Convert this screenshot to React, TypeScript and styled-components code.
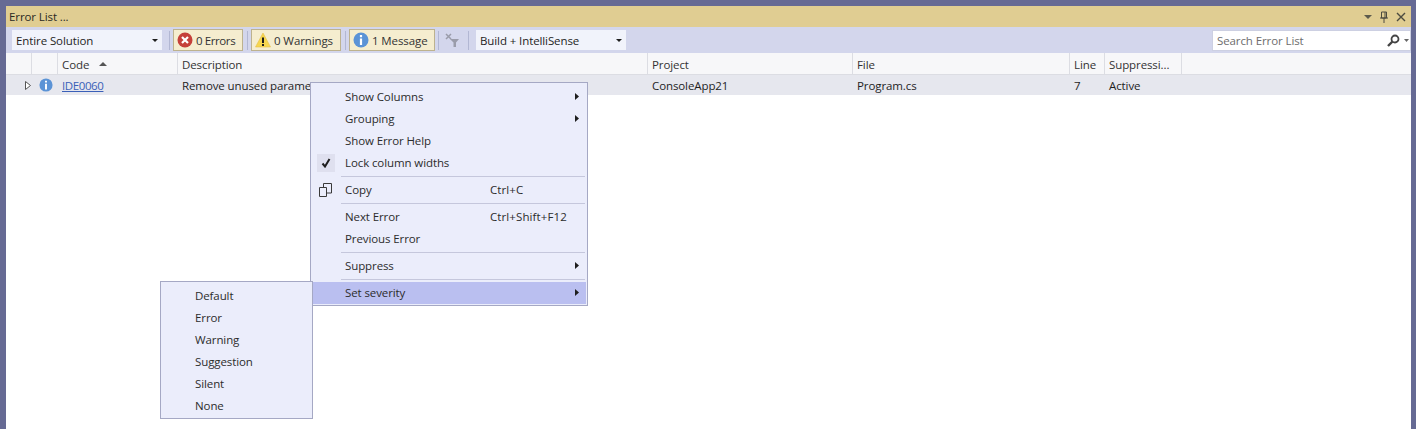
import styled, { createGlobalStyle } from "styled-components";

const GlobalStyle = createGlobalStyle`
  html, body {
    margin: 0;
    height: 429px;
    overflow: hidden;
    background: #666a94;
    font-family: "Open Sans", "Noto Sans", sans-serif;
    font-size: 11.5px;
    letter-spacing: -0.1px;
    color: #1e1e1e;
  }
`;

const columns = [
  { title: "", width: 26 },
  { title: "", width: 26 },
  { title: "Code", width: 120, sorted: true },
  { title: "Description", width: 470 },
  { title: "Project", width: 205 },
  { title: "File", width: 217 },
  { title: "Line", width: 35 },
  { title: "Suppressi...", width: 77 },
];

const ErrorIcon = () => (
  <svg width="16" height="16" viewBox="0 0 16 16">
    <circle cx="8" cy="8" r="7.5" fill="#c5403a" />
    <path d="M5 5l6 6M11 5l-6 6" stroke="#fff" strokeWidth="2.2" />
  </svg>
);

const WarningIcon = () => (
  <svg width="16" height="16" viewBox="0 0 16 16">
    <path d="M8 1L15.5 15H.5z" fill="#f6d64f" stroke="#e5c04a" strokeWidth=".6" />
    <path d="M8 5.5v5.5M8 12v2" stroke="#1e1e1e" strokeWidth="2" />
  </svg>
);

const InfoIcon = ({ size = 16 }: { size?: number }) => (
  <svg width={size} height={size} viewBox="0 0 16 16">
    <circle cx="8" cy="8" r="7.5" fill="#5b93d6" />
    <path d="M8 3v2.2M8 6.6V13" stroke="#fff" strokeWidth="2.2" />
  </svg>
);

const Caret = () => (
  <svg width="6" height="3" viewBox="0 0 6 3">
    <path d="M0 0h6L3 3z" fill="#1e1e1e" />
  </svg>
);

const Arrow = () => (
  <svg width="4" height="7" viewBox="0 0 4 7">
    <path d="M0 0l4 3.5L0 7z" fill="#1e1e1e" />
  </svg>
);

export default function App() {
  return (
    <>
      <GlobalStyle />
      <Window>
        <TitleBar>
          <span>Error List ...</span>
          <TitleIcons>
            <svg width="8" height="4" viewBox="0 0 8 4">
              <path d="M0 0h8L4 4z" fill="#5d5b4c" />
            </svg>
            <svg width="8" height="12" viewBox="0 0 8 12">
              <path d="M1.500 1h5v6h-5zM0 7h8M4 7v5M5 1v6" stroke="#4c4b40" fill="none" />
            </svg>
            <svg width="10" height="10" viewBox="0 0 10 10">
              <path d="M1 1l8 8M9 1l-8 8" stroke="#4c4b40" strokeWidth="1.4" />
            </svg>
          </TitleIcons>
        </TitleBar>
        <Toolbar>
          <Combo>
            Entire Solution
            <Caret />
          </Combo>
          <Separator $before={7} $after={3} />
          <FilterButton $width={70}>
            <ErrorIcon />
            <ButtonLabel>0 Errors</ButtonLabel>
          </FilterButton>
          <Separator $before={4} $after={3} />
          <FilterButton $width={90}>
            <WarningIcon />
            <span>0 Warnings</span>
          </FilterButton>
          <Separator $before={4} $after={3} />
          <FilterButton $width={86}>
            <InfoIcon />
            <span>1 Message</span>
          </FilterButton>
          <Separator $before={3} $after={6} />
          <ClearFilter>
            <svg width="15" height="15" viewBox="0 0 15 15">
              <path d="M1 1l5 5M6 1L1 6" stroke="#9a9caa" strokeWidth="1.5" />
              <path d="M5 6h9L11 9.500V14H8.500V9.500z" fill="#9a9caa" />
            </svg>
          </ClearFilter>
          <Separator $before={8} $after={7} />
          <Combo>
            Build + IntelliSense
            <Caret />
          </Combo>
          <Search>
            <span>Search Error List</span>
            <SearchIcons>
              <svg width="13" height="13" viewBox="0 0 13 13">
                <circle cx="8" cy="5" r="3.500" fill="none" stroke="#444" strokeWidth="1.800" />
                <path d="M5.500 7.500L1 12" stroke="#444" strokeWidth="2.400" />
              </svg>
              <svg width="5" height="3" viewBox="0 0 5 3">
                <path d="M0 0h5L2.500 3z" fill="#666" />
              </svg>
            </SearchIcons>
          </Search>
        </Toolbar>
        <HeaderRow>
          {columns.map((c, i) => (
            <HeaderCell key={i} $width={c.width}>
              {c.title}
              {c.sorted && (
                <SortMark viewBox="0 0 8 4" width="8" height="4">
                  <path d="M0 4h8L4 0z" fill="#555" />
                </SortMark>
              )}
            </HeaderCell>
          ))}
        </HeaderRow>
        <DataRow>
          <Cell $width={26}>
            <Expander viewBox="0 0 6 9" width="6" height="9">
              <path d="M.5.500l5 4-5 4z" fill="#fff" stroke="#555" />
            </Expander>
          </Cell>
          <IconCell $width={26}>
            <InfoIcon size={14} />
          </IconCell>
          <Cell $width={120}>
            <CodeLink>IDE0060</CodeLink>
          </Cell>
          <Cell $width={470}>Remove unused parameter 'args'</Cell>
          <Cell $width={205}>ConsoleApp21</Cell>
          <Cell $width={217}>Program.cs</Cell>
          <Cell $width={35}>7</Cell>
          <Cell $width={77}>Active</Cell>
        </DataRow>
        <ContextMenu>
          <MenuItem>
            <span>Show Columns</span>
            <ArrowSlot>
              <Arrow />
            </ArrowSlot>
          </MenuItem>
          <MenuItem>
            <span>Grouping</span>
            <ArrowSlot>
              <Arrow />
            </ArrowSlot>
          </MenuItem>
          <MenuItem>
            <span>Show Error Help</span>
          </MenuItem>
          <MenuItem>
            <CheckBox>
              <svg width="10" height="10" viewBox="0 0 10 10">
                <path d="M1.500 5.500L4 8.500 8.500 1" fill="none" stroke="#1e1e1e" strokeWidth="2" />
              </svg>
            </CheckBox>
            <span>Lock column widths</span>
          </MenuItem>
          <MenuSeparator />
          <MenuItem>
            <CopyGlyph width="13" height="14" viewBox="0 0 13 14">
              <path d="M.5 4.500h7v9h-7zM4.500 4.500V.5h8v9.500H8" fill="none" stroke="#3a3a3a" />
            </CopyGlyph>
            <span>Copy</span>
            <Shortcut>Ctrl+C</Shortcut>
          </MenuItem>
          <MenuSeparator />
          <MenuItem>
            <span>Next Error</span>
            <Shortcut>Ctrl+Shift+F12</Shortcut>
          </MenuItem>
          <MenuItem>
            <span>Previous Error</span>
          </MenuItem>
          <MenuSeparator />
          <MenuItem>
            <span>Suppress</span>
            <ArrowSlot>
              <Arrow />
            </ArrowSlot>
          </MenuItem>
          <MenuSeparator />
          <MenuItem $active>
            <span>Set severity</span>
            <ArrowSlot>
              <Arrow />
            </ArrowSlot>
          </MenuItem>
        </ContextMenu>
        <SubMenu>
          {["Default", "Error", "Warning", "Suggestion", "Silent", "None"].map((s) => (
            <MenuItem key={s}>
              <span>{s}</span>
            </MenuItem>
          ))}
        </SubMenu>
      </Window>
    </>
  );
}

const Window = styled.div`
  margin: 6px 5px 0 6px;
  height: 423px;
  background: #fff;
  display: flex;
  flex-direction: column;
  position: relative;
  overflow: visible;
`;
const TitleBar = styled.div`
  height: 21px;
  background: #e0cd92;
  display: flex;
  align-items: center;
  justify-content: space-between;
  padding: 0 5px 0 3px;
  color: #2a2a24;
`;
const TitleIcons = styled.div`
  display: flex;
  align-items: center;
  gap: 8px;
`;
const Toolbar = styled.div`
  height: 26px;
  background: #d3d6ec;
  display: flex;
  align-items: center;
  padding-left: 6px;
`;
const Combo = styled.div`
  width: 150px;
  height: 20px;
  box-sizing: border-box;
  background: #f1f3fb;
  display: flex;
  align-items: center;
  justify-content: space-between;
  padding: 1px 4px 0;
  color: #1e1e1e;
`;
const Separator = styled.div<{ $before: number; $after: number }>`
  width: 1px;
  height: 19px;
  background: #b2b7d3;
  margin: 0 ${(p) => p.$after}px 0 ${(p) => p.$before}px;
`;
const FilterButton = styled.div<{ $width: number }>`
  width: ${(p) => p.$width}px;
  height: 22px;
  box-sizing: border-box;
  background: #f5edcf;
  border: 1px solid #bdb28e;
  display: flex;
  align-items: center;
  gap: 3px;
  padding-left: 3px;
  color: #333;
  white-space: nowrap;
`;
const ButtonLabel = styled.span`
  letter-spacing: -0.4px;
`;
const ClearFilter = styled.div`
  width: 15px;
  display: flex;
  justify-content: center;
`;
const Search = styled.div`
  width: 199px;
  height: 21px;
  box-sizing: border-box;
  margin-left: auto;
  background: #fff;
  border: 1px solid #cdd0e2;
  display: flex;
  align-items: center;
  justify-content: space-between;
  padding: 0 1px 0 4px;
  color: #6d6d6d;
`;
const SearchIcons = styled.div`
  display: flex;
  align-items: center;
  gap: 4px;
`;
const HeaderRow = styled.div`
  height: 22px;
  box-sizing: border-box;
  background: #f7f7f9;
  border-bottom: 1px solid #dcdde3;
  display: flex;
`;
const HeaderCell = styled.div<{ $width: number }>`
  width: ${(p) => p.$width}px;
  box-sizing: border-box;
  border-right: 1px solid #dcdde3;
  padding: 2px 0 0 4px;
  display: flex;
  align-items: center;
  color: #333;
  white-space: nowrap;
`;
const SortMark = styled.svg`
  margin: -2px 0 0 10px;
`;
const DataRow = styled.div`
  height: 20px;
  background: #e6e7ee;
  display: flex;
`;
const Cell = styled.div<{ $width: number }>`
  width: ${(p) => p.$width}px;
  padding-left: 4px;
  box-sizing: border-box;
  display: flex;
  align-items: center;
  white-space: nowrap;
  overflow: hidden;
`;
const IconCell = styled(Cell)`
  padding-left: 7px;
`;
const Expander = styled.svg`
  margin-left: 15px;
`;
const CodeLink = styled.span`
  color: #3a5fb8;
  text-decoration: underline;
  letter-spacing: -0.4px;
`;
const ContextMenu = styled.div`
  position: absolute;
  left: 304px;
  top: 76px;
  width: 278px;
  height: 224px;
  box-sizing: border-box;
  background: #ebedfb;
  border: 1px solid #a5a8c4;
  padding: 3px 1px 1px;
`;
const SubMenu = styled.div`
  position: absolute;
  left: 154px;
  top: 275px;
  width: 153px;
  height: 138px;
  box-sizing: border-box;
  background: #ebedfb;
  border: 1px solid #a5a8c4;
  padding: 3px 1px 1px;
`;
const MenuItem = styled.div<{ $active?: boolean }>`
  height: 22px;
  box-sizing: border-box;
  display: flex;
  align-items: center;
  padding: 0 0 1px 33px;
  position: relative;
  color: #2c2c2c;
  white-space: nowrap;
  background: ${(p) => (p.$active ? "#babff0" : "transparent")};
`;
const MenuSeparator = styled.div`
  height: 1px;
  margin: 2px 1px 2px 29px;
  background: #c5c7dc;
`;
const Shortcut = styled.span`
  position: absolute;
  left: 178px;
  letter-spacing: 0.1px;
`;
const ArrowSlot = styled.span`
  position: absolute;
  right: 7px;
  display: flex;
`;
const CheckBox = styled.span`
  position: absolute;
  left: 5px;
  width: 18px;
  height: 18px;
  background: #dfe0ef;
  display: flex;
  align-items: center;
  justify-content: center;
`;
const CopyGlyph = styled.svg`
  position: absolute;
  left: 7px;
`;
